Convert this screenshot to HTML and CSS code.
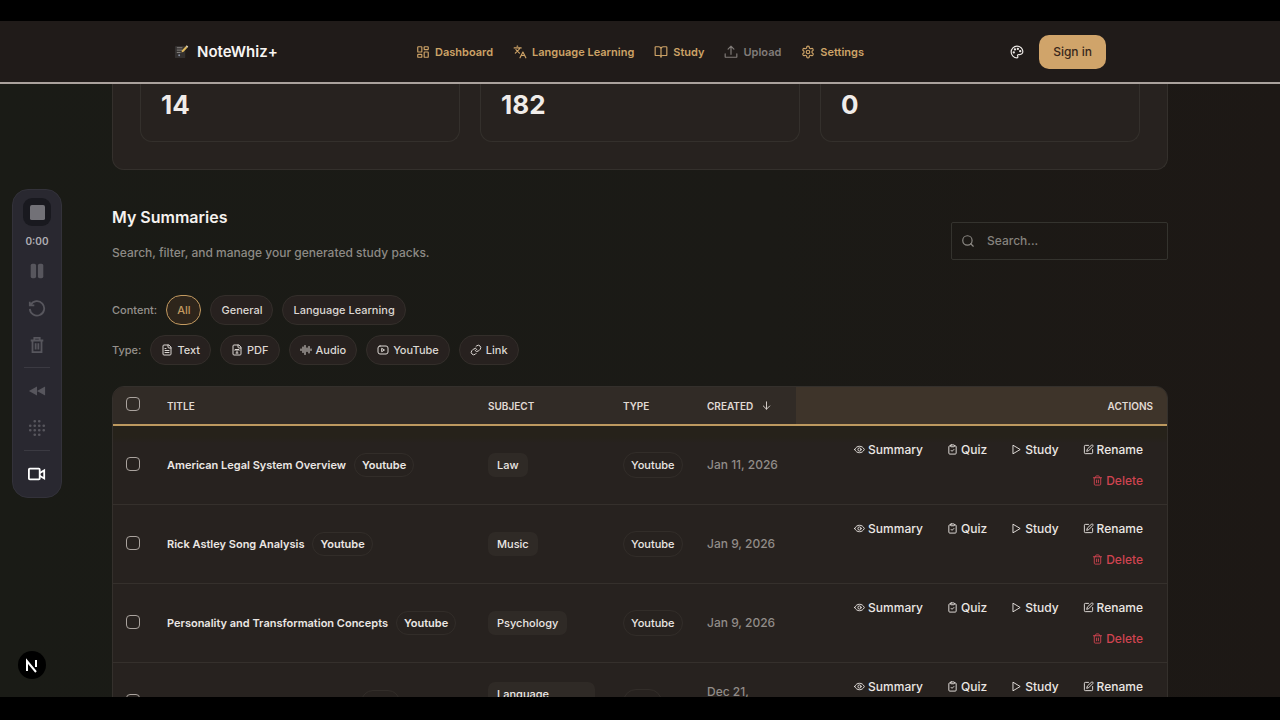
FILE: index.html
```html
<!DOCTYPE html>
<html lang="en">
<head>
  <meta charset="UTF-8">
  <meta name="viewport" content="width=device-width, initial-scale=1">
  <title>NoteWhiz+</title>
  <link rel="stylesheet" href="styles.css">
</head>
<body>

  <!-- icon set -->
  <svg class="sprite" aria-hidden="true">
    <symbol id="i-grid" viewBox="0 0 24 24"><rect x="3" y="3" width="7" height="9" rx="1"/><rect x="14" y="3" width="7" height="5" rx="1"/><rect x="14" y="12" width="7" height="9" rx="1"/><rect x="3" y="16" width="7" height="5" rx="1"/></symbol>
    <symbol id="i-lang" viewBox="0 0 24 24"><path d="m5 8 6 6M4 14l6-6 2-3M2 5h12M7 2h1M22 22l-5-10-5 10M14 18h6"/></symbol>
    <symbol id="i-book" viewBox="0 0 24 24"><path d="M12 7v14M3 18a1 1 0 0 1-1-1V4a1 1 0 0 1 1-1h5a4 4 0 0 1 4 4 4 4 0 0 1 4-4h5a1 1 0 0 1 1 1v13a1 1 0 0 1-1 1h-6a3 3 0 0 0-3 3 3 3 0 0 0-3-3z"/></symbol>
    <symbol id="i-upload" viewBox="0 0 24 24"><path d="M2 15v5a1 1 0 0 0 1 1h18a1 1 0 0 0 1-1v-5M17 7l-5-5-5 5M12 2v14"/></symbol>
    <symbol id="i-gear" viewBox="0 0 24 24"><path d="M12.2 2h-.4a2 2 0 0 0-2 2v.2a2 2 0 0 1-1 1.7l-.4.3a2 2 0 0 1-2 0l-.2-.1a2 2 0 0 0-2.7.7l-.2.4a2 2 0 0 0 .7 2.7l.2.1a2 2 0 0 1 1 1.7v.6a2 2 0 0 1-1 1.7l-.2.1a2 2 0 0 0-.7 2.7l.2.4a2 2 0 0 0 2.7.7l.2-.1a2 2 0 0 1 2 0l.4.3a2 2 0 0 1 1 1.7v.2a2 2 0 0 0 2 2h.4a2 2 0 0 0 2-2v-.2a2 2 0 0 1 1-1.7l.4-.3a2 2 0 0 1 2 0l.2.1a2 2 0 0 0 2.7-.7l.2-.4a2 2 0 0 0-.7-2.7l-.2-.1a2 2 0 0 1-1-1.7v-.6a2 2 0 0 1 1-1.7l.2-.1a2 2 0 0 0 .7-2.7l-.2-.4a2 2 0 0 0-2.7-.7l-.2.1a2 2 0 0 1-2 0l-.4-.3a2 2 0 0 1-1-1.7V4a2 2 0 0 0-2-2z"/><circle cx="12" cy="12" r="3"/></symbol>
    <symbol id="i-palette" viewBox="0 0 24 24"><path d="M12 2C6.500 2 2 6.500 2 12s4.500 10 10 10c.9 0 1.600-.7 1.600-1.700 0-.4-.2-.8-.4-1.100-.3-.3-.4-.7-.4-1.100a1.600 1.600 0 0 1 1.600-1.700h2c3.100 0 5.600-2.500 5.600-5.500C22 6 17.500 2 12 2z"/><circle cx="13.500" cy="6.500" r="1"/><circle cx="17.500" cy="10.500" r="1"/><circle cx="8.500" cy="7.500" r="1"/><circle cx="6.500" cy="12.500" r="1"/></symbol>
    <symbol id="i-search" viewBox="0 0 24 24"><circle cx="11" cy="11" r="8"/><path d="m21 21-4.300-4.300"/></symbol>
    <symbol id="i-text" viewBox="0 0 24 24"><path d="M15 2H6a2 2 0 0 0-2 2v16a2 2 0 0 0 2 2h12a2 2 0 0 0 2-2V7zM14 2v4a2 2 0 0 0 2 2h4M10 9H8M16 13H8M16 17H8"/></symbol>
    <symbol id="i-pdf" viewBox="0 0 24 24"><path d="M15 2H6a2 2 0 0 0-2 2v16a2 2 0 0 0 2 2h12a2 2 0 0 0 2-2V7zM14 2v4a2 2 0 0 0 2 2h4M8 13v-2h8v2M12 11v7M10 18h4"/></symbol>
    <symbol id="i-audio" viewBox="0 0 24 24"><path d="M2 10v3M6 6v11M10 3v18M14 8v7M18 5v13M22 10v3"/></symbol>
    <symbol id="i-video" viewBox="0 0 24 24"><rect x="2" y="4" width="20" height="16" rx="4"/><path d="m10 9 5 3-5 3z"/></symbol>
    <symbol id="i-link" viewBox="0 0 24 24"><path d="M10 13a5 5 0 0 0 7.500.5l3-3a5 5 0 0 0-7-7l-1.700 1.700M14 11a5 5 0 0 0-7.500-.5l-3 3a5 5 0 0 0 7 7l1.700-1.700"/></symbol>
    <symbol id="i-down" viewBox="0 0 24 24"><path d="M12 4v16M19 13l-7 7-7-7"/></symbol>
    <symbol id="i-eye" viewBox="0 0 24 24"><path d="M1.500 12C4 7 7.500 5 12 5s8 2 10.500 7c-2.500 5-6 7-10.500 7s-8-2-10.500-7z"/><circle cx="12" cy="12" r="3.500"/></symbol>
    <symbol id="i-quiz" viewBox="0 0 24 24"><rect x="8" y="2" width="8" height="4" rx="1"/><path d="M16 4h2a2 2 0 0 1 2 2v14a2 2 0 0 1-2 2H6a2 2 0 0 1-2-2V6a2 2 0 0 1 2-2h2M9 14l2 2 4-4"/></symbol>
    <symbol id="i-play" viewBox="0 0 24 24"><path d="M5 3l15 9-15 9z"/></symbol>
    <symbol id="i-edit" viewBox="0 0 24 24"><path d="M12 3H5a2 2 0 0 0-2 2v14a2 2 0 0 0 2 2h14a2 2 0 0 0 2-2v-7M18.400 2.600a2.100 2.100 0 0 1 3 3L12.400 14.600 8 16l1.400-4.400z"/></symbol>
    <symbol id="i-trash" viewBox="0 0 24 24"><path d="M3 6h18M19 6v14a2 2 0 0 1-2 2H7a2 2 0 0 1-2-2V6M8 6V4a2 2 0 0 1 2-2h4a2 2 0 0 1 2 2v2M10 11v6M14 11v6"/></symbol>
  </svg>

  <div class="screen">
    <header class="topbar">
      <div class="topbar-inner">
        <a class="brand" href="#">
          <svg class="logo" viewBox="0 0 16 16" aria-hidden="true">
            <rect x="1" y="2" width="11" height="13" rx="1" fill="#33302f"/>
            <path d="M3 4h6M3 6.500h6M3 9h4" stroke="#8d8a88" stroke-width="1"/>
            <circle cx="5.500" cy="12" r="1" fill="#8b93a5"/>
            <path d="M8 9l.6-2.400 4-4.200 1.600 1.500-4 4.300z" fill="#e0b95c"/>
            <path d="M12.600 2.400l1-1 1.600 1.500-1 1z" fill="#e9dcc0"/>
          </svg>
          NoteWhiz+
        </a>
        <nav class="nav">
          <a href="#"><svg class="icon"><use href="#i-grid"/></svg>Dashboard</a>
          <a href="#"><svg class="icon"><use href="#i-lang"/></svg>Language Learning</a>
          <a href="#"><svg class="icon"><use href="#i-book"/></svg>Study</a>
          <a href="#" class="muted"><svg class="icon"><use href="#i-upload"/></svg>Upload</a>
          <a href="#"><svg class="icon"><use href="#i-gear"/></svg>Settings</a>
        </nav>
        <div class="account">
          <button class="theme-btn" aria-label="Theme"><svg class="icon"><use href="#i-palette"/></svg></button>
          <button class="signin">Sign in</button>
        </div>
      </div>
    </header>

    <main class="content">
      <section class="stats">
        <div class="stat">14</div>
        <div class="stat">182</div>
        <div class="stat">0</div>
      </section>

      <section class="section-head">
        <div>
          <h2>My Summaries</h2>
          <p>Search, filter, and manage your generated study packs.</p>
        </div>
        <label class="search">
          <svg class="icon"><use href="#i-search"/></svg>
          <input type="search" placeholder="Search..." aria-label="Search summaries">
        </label>
      </section>

      <div class="filters">
        <div class="filter-row">
          <span>Content:</span>
          <button class="pill active">All</button>
          <button class="pill">General</button>
          <button class="pill">Language Learning</button>
        </div>
        <div class="filter-row">
          <span>Type:</span>
          <button class="pill"><svg class="icon"><use href="#i-text"/></svg>Text</button>
          <button class="pill"><svg class="icon"><use href="#i-pdf"/></svg>PDF</button>
          <button class="pill"><svg class="icon"><use href="#i-audio"/></svg>Audio</button>
          <button class="pill"><svg class="icon"><use href="#i-video"/></svg>YouTube</button>
          <button class="pill"><svg class="icon"><use href="#i-link"/></svg>Link</button>
        </div>
      </div>

      <div class="table-wrap">
        <table>
          <colgroup>
            <col class="c-check"><col class="c-title"><col class="c-subject"><col class="c-type"><col class="c-created"><col>
          </colgroup>
          <thead>
            <tr>
              <th class="check"><input type="checkbox" aria-label="Select all"></th>
              <th>TITLE</th>
              <th>SUBJECT</th>
              <th>TYPE</th>
              <th><span class="sort">CREATED <svg class="icon"><use href="#i-down"/></svg></span></th>
              <th class="actions-head">ACTIONS</th>
            </tr>
          </thead>
          <tbody>
            <tr>
              <td class="check"><input type="checkbox" aria-label="Select American Legal System Overview"></td>
              <td><div class="title">American Legal System Overview <span class="tag">Youtube</span></div></td>
              <td><span class="subject">Law</span></td>
              <td><span class="type">Youtube</span></td>
              <td class="date">Jan 11, 2026</td>
              <td>
                <div class="actions">
                  <button><svg class="icon"><use href="#i-eye"/></svg>Summary</button>
                  <button><svg class="icon"><use href="#i-quiz"/></svg>Quiz</button>
                  <button><svg class="icon"><use href="#i-play"/></svg>Study</button>
                  <button><svg class="icon"><use href="#i-edit"/></svg>Rename</button>
                  <button class="delete"><svg class="icon"><use href="#i-trash"/></svg>Delete</button>
                </div>
              </td>
            </tr>
            <tr>
              <td class="check"><input type="checkbox" aria-label="Select Rick Astley Song Analysis"></td>
              <td><div class="title">Rick Astley Song Analysis <span class="tag">Youtube</span></div></td>
              <td><span class="subject">Music</span></td>
              <td><span class="type">Youtube</span></td>
              <td class="date">Jan 9, 2026</td>
              <td>
                <div class="actions">
                  <button><svg class="icon"><use href="#i-eye"/></svg>Summary</button>
                  <button><svg class="icon"><use href="#i-quiz"/></svg>Quiz</button>
                  <button><svg class="icon"><use href="#i-play"/></svg>Study</button>
                  <button><svg class="icon"><use href="#i-edit"/></svg>Rename</button>
                  <button class="delete"><svg class="icon"><use href="#i-trash"/></svg>Delete</button>
                </div>
              </td>
            </tr>
            <tr>
              <td class="check"><input type="checkbox" aria-label="Select Personality and Transformation Concepts"></td>
              <td><div class="title">Personality and Transformation Concepts <span class="tag">Youtube</span></div></td>
              <td><span class="subject">Psychology</span></td>
              <td><span class="type">Youtube</span></td>
              <td class="date">Jan 9, 2026</td>
              <td>
                <div class="actions">
                  <button><svg class="icon"><use href="#i-eye"/></svg>Summary</button>
                  <button><svg class="icon"><use href="#i-quiz"/></svg>Quiz</button>
                  <button><svg class="icon"><use href="#i-play"/></svg>Study</button>
                  <button><svg class="icon"><use href="#i-edit"/></svg>Rename</button>
                  <button class="delete"><svg class="icon"><use href="#i-trash"/></svg>Delete</button>
                </div>
              </td>
            </tr>
            <tr>
              <td class="check"><input type="checkbox" aria-label="Select Everyday Spanish Words for Travel"></td>
              <td><div class="title">Everyday Spanish Words for Travel <span class="tag">Text</span></div></td>
              <td><span class="subject">Language Learning</span></td>
              <td><span class="type">Text</span></td>
              <td class="date">Dec 21,<br>2025</td>
              <td>
                <div class="actions">
                  <button><svg class="icon"><use href="#i-eye"/></svg>Summary</button>
                  <button><svg class="icon"><use href="#i-quiz"/></svg>Quiz</button>
                  <button><svg class="icon"><use href="#i-play"/></svg>Study</button>
                  <button><svg class="icon"><use href="#i-edit"/></svg>Rename</button>
                  <button class="delete"><svg class="icon"><use href="#i-trash"/></svg>Delete</button>
                </div>
              </td>
            </tr>
          </tbody>
        </table>
      </div>
    </main>
  </div>

  <!-- floating recorder -->
  <aside class="recorder">
    <button class="stop" aria-label="Stop"><svg viewBox="0 0 16 16"><rect width="16" height="16" rx="2"/></svg></button>
    <time>0:00</time>
    <button aria-label="Pause"><svg viewBox="0 0 20 20"><rect x="3" y="2" width="6" height="16" rx="2"/><rect x="11" y="2" width="6" height="16" rx="2"/></svg></button>
    <button aria-label="Restart"><svg class="line" viewBox="0 0 20 20"><path d="M3 6.500A8 8 0 1 1 2 11M2 3v4h5"/></svg></button>
    <button aria-label="Discard"><svg class="line" viewBox="0 0 20 20"><path d="M3 5h14M5 5v13h10V5M7 5V2h6v3M8.500 8v7M11.500 8v7"/></svg></button>
    <hr>
    <button aria-label="Rewind"><svg viewBox="0 0 20 20"><path d="M10 5v10L1 10zM19 5v10l-9-5z"/></svg></button>
    <button aria-label="Blur"><svg viewBox="0 0 20 20"><path class="dots" d="M7.500 2.500h0M12.500 2.500h0M2.500 7.500h0M7.500 7.500h0M12.500 7.500h0M17.500 7.500h0M2.500 12.500h0M7.500 12.500h0M12.500 12.500h0M17.500 12.500h0M7.500 17.500h0M12.500 17.500h0"/></svg></button>
    <hr>
    <button class="camera" aria-label="Camera"><svg class="line" viewBox="0 0 20 20"><rect x="1" y="4" width="12" height="12" rx="1"/><path d="M13 9l5-3v9l-5-3"/></svg></button>
  </aside>

  <button class="dev-badge" aria-label="Dev tools">
    <svg viewBox="0 0 28 28" aria-hidden="true"><path d="M9 20V10l9 11M18 9v7" fill="none" stroke="#fff" stroke-width="2"/></svg>
  </button>

</body>
</html>
```
FILE: styles.css
```css
* {
  box-sizing: border-box;
}

body {
  margin: 0;
  height: 100vh;
  padding: 21px 0 23px;
  background: #000;
  color: #ebe7e4;
  font-family: Inter, 'Liberation Sans', sans-serif;
  font-size: 12px;
  font-weight: 500;
}

a {
  color: inherit;
  text-decoration: none;
}

button {
  border: none;
  padding: 0;
  background: none;
  color: inherit;
  font: inherit;
  cursor: pointer;
}

.sprite {
  display: none;
}

.icon {
  width: 14px;
  height: 14px;
  flex-shrink: 0;
  fill: none;
  stroke: currentColor;
  stroke-width: 2;
  stroke-linecap: round;
  stroke-linejoin: round;
}

.screen {
  height: 100%;
  overflow: hidden;
  background: linear-gradient(90deg, #1a1b16, #1b1a16 60%, #1d1815);
}

/* Top bar */
.topbar {
  background: #201b19;
  border-bottom: 2px solid #aaa29d;
}

.topbar-inner {
  display: grid;
  grid-template-columns: 1fr auto 1fr;
  align-items: center;
  max-width: 932px;
  height: 61px;
  margin: 0 auto;
}

.brand {
  display: flex;
  align-items: center;
  gap: 8px;
  color: #f7f4f2;
  font-size: 15px;
  font-weight: 600;
}

.logo {
  width: 15px;
  height: 15px;
}

.nav {
  display: flex;
  gap: 20px;
  color: #cda367;
  font-size: 11px;
  font-weight: 600;
}

.nav a {
  display: flex;
  align-items: center;
  gap: 5px;
}

.nav .muted {
  color: #817c79;
}

.account {
  display: flex;
  justify-content: flex-end;
  align-items: center;
  gap: 15px;
}

.theme-btn {
  display: flex;
}

.signin {
  height: 34px;
  padding: 0 14px;
  border-radius: 10px;
  background: #d0a46a;
  color: #38271a;
}

.content {
  max-width: 1056px;
  margin: 0 auto;
}

/* Stats */
.stats {
  display: grid;
  grid-template-columns: repeat(3, 1fr);
  gap: 20px;
  padding: 0 27px 27px;
  background: #27221f;
  border: 1px solid #34302c;
  border-top: none;
  border-radius: 0 0 12px 12px;
}

.stat {
  height: 58px;
  padding: 3px 20px;
  border: 1px solid #34302c;
  border-top: none;
  border-radius: 0 0 12px 12px;
  color: #f0ece9;
  font-size: 26px;
  line-height: 36px;
  font-weight: 700;
}

/* Heading and search */
.section-head {
  display: flex;
  justify-content: space-between;
  align-items: center;
  padding: 35px 0 33px;
}

.section-head h2 {
  margin: 0 0 15px;
  color: #f5f2ef;
  font-size: 16px;
  line-height: 24px;
  font-weight: 600;
}

.section-head p {
  margin: 0;
  color: #8d8a85;
  line-height: 18px;
}

.search {
  display: flex;
  align-items: center;
  gap: 12px;
  width: 217px;
  height: 38px;
  margin-top: 14px;
  padding: 0 9px;
  border: 1px solid #34332e;
  border-radius: 2px;
  color: #8d8a85;
}

.search input {
  flex: 1;
  min-width: 0;
  padding: 0;
  border: none;
  outline: none;
  background: none;
  color: inherit;
  font: inherit;
}

.search input::placeholder {
  color: #85827d;
  opacity: 1;
}

/* Filters */
.filters {
  display: flex;
  flex-direction: column;
  gap: 10px;
}

.filter-row {
  display: flex;
  align-items: center;
  gap: 9px;
  color: #95918c;
  font-size: 11px;
}

.pill {
  display: flex;
  align-items: center;
  gap: 4px;
  height: 30px;
  padding: 0 10px;
  border: 1px solid #332e2a;
  border-radius: 15px;
  background: #27211f;
  color: #dcd7d3;
}

.pill .icon {
  width: 12px;
  height: 12px;
}

.pill.active {
  border-color: #c39a60;
  background: #2e251b;
  color: #c39a60;
}

/* Table */
.table-wrap {
  margin-top: 21px;
  border: 1px solid #34302c;
  border-radius: 12px;
  overflow: hidden;
  background: #27221f;
}

table {
  width: 100%;
  table-layout: fixed;
  border-collapse: collapse;
}

.c-check {
  width: 40px;
}

.c-title {
  width: 321px;
}

.c-subject {
  width: 135px;
}

.c-type {
  width: 84px;
}

.c-created {
  width: 103px;
}

thead tr {
  height: 38px;
  background: #312b26;
  border-bottom: 2px solid #bd995f;
}

th {
  padding: 0 14px;
  color: #e0dad4;
  font-size: 10px;
  font-weight: 600;
  text-align: left;
}

.actions-head {
  background: #3e342a;
  text-align: right;
}

.sort {
  display: flex;
  align-items: center;
  gap: 8px;
}

.sort .icon {
  width: 11px;
  height: 11px;
}

tbody tr {
  border-bottom: 1px solid #35302c;
}

tbody tr:first-child {
  background: linear-gradient(#26221a 12px, #27221f 18px);
}

td {
  padding: 10px 14px;
}

.check {
  padding: 0 0 4px;
  text-align: center;
}

.check input {
  appearance: none;
  width: 14px;
  height: 14px;
  margin: 0;
  border: 1px solid #aaa39e;
  border-radius: 4px;
  vertical-align: middle;
}

.title {
  display: flex;
  align-items: center;
  gap: 8px;
  font-size: 11px;
  font-weight: 600;
  white-space: nowrap;
}

.tag,
.type {
  padding: 3px 7px;
  border: 1px solid #322d29;
  border-radius: 12px;
  font-size: 11px;
  line-height: 16px;
}

.type {
  display: inline-block;
  padding: 4px 7px;
  border-radius: 13px;
}

.subject {
  display: inline-block;
  padding: 4px 9px;
  border-radius: 7px;
  background: #2f2a26;
  font-size: 11px;
  line-height: 16px;
}

.date {
  color: #918c88;
  line-height: 20px;
}

.actions {
  display: flex;
  flex-wrap: wrap;
  justify-content: flex-end;
  gap: 4px;
}

.actions button {
  display: flex;
  align-items: center;
  gap: 3px;
  height: 27px;
  padding: 0 10px;
}

.actions .icon {
  width: 11px;
  height: 11px;
}

.actions .delete {
  color: #cf4450;
}

/* Floating widgets over the page */
.recorder {
  position: fixed;
  top: 189px;
  left: 12px;
  display: flex;
  flex-direction: column;
  align-items: center;
  width: 50px;
  padding: 8px 0 5px;
  border: 1px solid #33323a;
  border-radius: 16px;
  background: #292830;
}

.recorder button {
  display: flex;
  align-items: center;
  justify-content: center;
  width: 28px;
  height: 37px;
}

.recorder .stop {
  height: 28px;
  border-radius: 9px;
  background: #19191f;
}

.recorder svg {
  width: 18px;
  height: 18px;
  fill: #57565d;
}

.recorder .stop svg {
  width: 15px;
  height: 15px;
  fill: #727177;
}

.recorder .line {
  fill: none;
  stroke: #57565d;
  stroke-width: 2;
}

.recorder .camera .line {
  stroke: #fff;
}

.recorder .dots {
  stroke: #57565d;
  stroke-width: 3;
  stroke-linecap: round;
}

.recorder time {
  padding: 7px 0 3px;
  color: #b0afb4;
  font-size: 10px;
  line-height: 16px;
  font-weight: 600;
}

.recorder hr {
  width: 26px;
  margin: 4px 0;
  border: none;
  border-top: 1px solid #3b3a42;
}

.dev-badge {
  position: fixed;
  left: 18px;
  bottom: 41px;
  width: 28px;
  height: 28px;
  border-radius: 50%;
  background: #000;
}
```
